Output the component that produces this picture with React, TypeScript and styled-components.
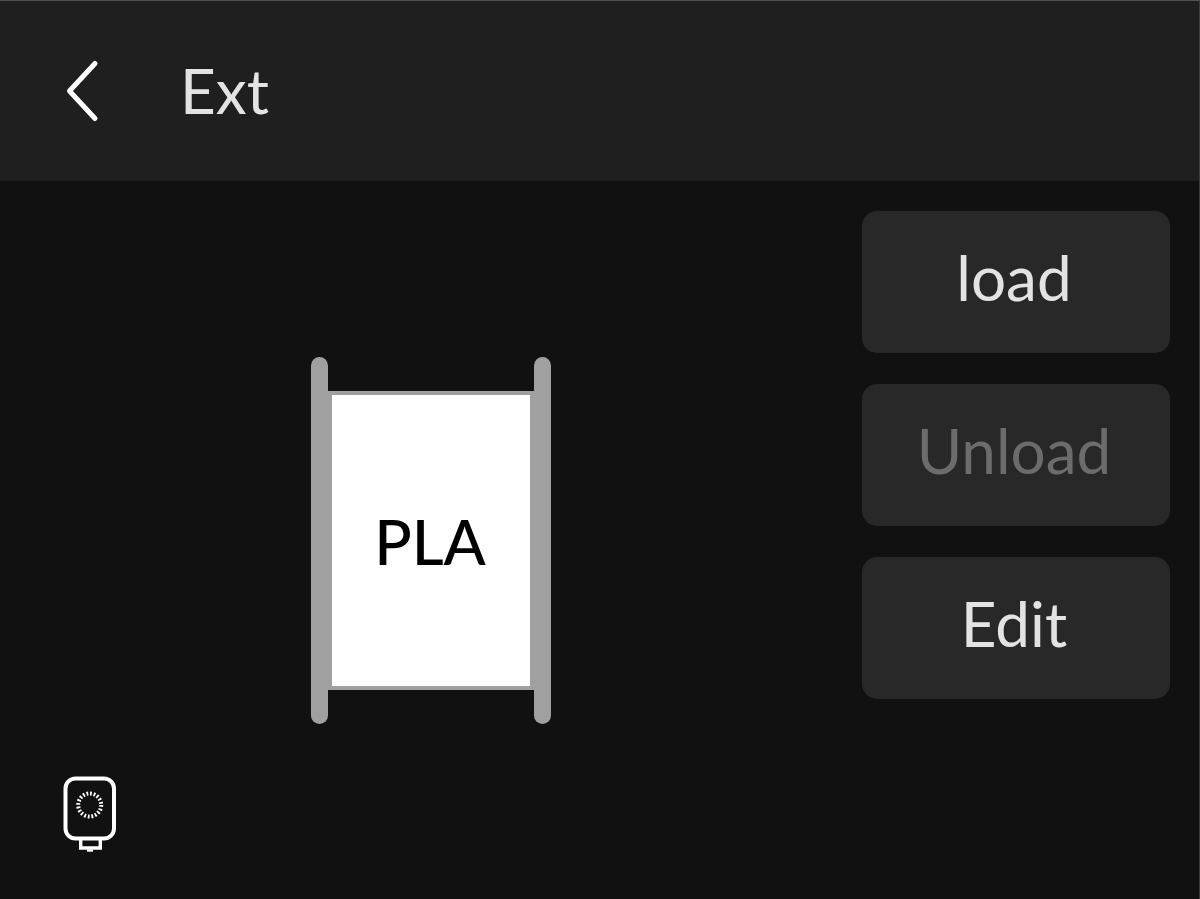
import React from "react";
import styled, { createGlobalStyle } from "styled-components";

const GlobalStyle = createGlobalStyle`
  *, *::before, *::after { box-sizing: border-box; }
  body { margin: 0; background: #111111; }
  button { font: inherit; }
`;

const Screen = styled.div`
  display: flex;
  flex-direction: column;
  min-height: 100vh;
  border-top: 1px solid #505250;
  border-right: 1px solid #3c3c3c;
  background: #111111;
  color: #e3e3e3;
  font-family: Lato, Roboto, sans-serif;
  font-size: 62px;
  line-height: 72px;
`;

const Header = styled.header`
  display: flex;
  align-items: center;
  gap: 70px;
  height: 180px;
  padding: 0 56px;
  background: #1f1f1f;
`;

const BackButton = styled.button`
  display: flex;
  padding: 0;
  border: 0;
  background: none;
  color: #ffffff;
  cursor: pointer;
`;

const Title = styled.h1`
  margin: 0;
  padding-bottom: 2px;
  font-size: inherit;
  font-weight: 400;
`;

const Main = styled.main`
  flex: 1;
  display: grid;
  grid-template-columns: 1fr 308px;
  padding-right: 29px;
`;

const Stage = styled.section`
  display: grid;
  grid-template: 1fr / 1fr;
  & > * { grid-area: 1 / 1; }
`;

const Spool = styled.div`
  place-self: center;
  display: flex;
  align-items: center;
`;

const Flange = styled.span`
  width: 17px;
  height: 367px;
  border-radius: 9px;
  background: #a0a0a0;
`;

const Filament = styled.div`
  display: flex;
  align-items: center;
  justify-content: center;
  width: 206px;
  height: 299px;
  padding: 2px 2px 0 0;
  border: 4px solid #a0a0a0;
  background: #ffffff;
  color: #000000;
  font-weight: 500;
`;

const PrinterIcon = styled.svg`
  place-self: end start;
  margin: 0 0 46px 62px;
`;

const Actions = styled.nav`
  display: flex;
  flex-direction: column;
  gap: 31px;
  padding-top: 30px;
`;

const ActionButton = styled.button`
  height: 142px;
  padding: 0 4px 10px 0;
  border: 0;
  border-radius: 15px;
  background: #282828;
  color: #e3e3e3;
  cursor: pointer;
  &:disabled {
    color: #6c6c6c;
    cursor: default;
  }
`;

export default function App() {
  return (
    <Screen>
      <GlobalStyle />
      <Header>
        <BackButton aria-label="Back">
          <svg width="54" height="72" viewBox="0 0 54 72" fill="none" stroke="currentColor" strokeWidth="5" strokeLinecap="round" strokeLinejoin="round">
            <path d="M39 8.500 L13.500 36 L39 63.500" />
          </svg>
        </BackButton>
        <Title>Ext</Title>
      </Header>
      <Main>
        <Stage>
          <Spool>
            <Flange />
            <Filament>PLA</Filament>
            <Flange />
          </Spool>
          <PrinterIcon width="56" height="78" viewBox="0 0 56 78" fill="none" stroke="#ffffff" aria-hidden="true">
            <rect x="3.500" y="3.500" width="48.500" height="60" rx="10" strokeWidth="4" />
            <circle cx="27.700" cy="30" r="11.500" strokeWidth="4" strokeDasharray="1.800 1.813" />
            <path d="M18.700 64 V73 H38.300 V64" strokeWidth="3.400" />
            <path d="M25 75.500 H31" strokeWidth="2.400" />
          </PrinterIcon>
        </Stage>
        <Actions aria-label="Filament actions">
          <ActionButton>load</ActionButton>
          <ActionButton disabled>Unload</ActionButton>
          <ActionButton>Edit</ActionButton>
        </Actions>
      </Main>
    </Screen>
  );
}
